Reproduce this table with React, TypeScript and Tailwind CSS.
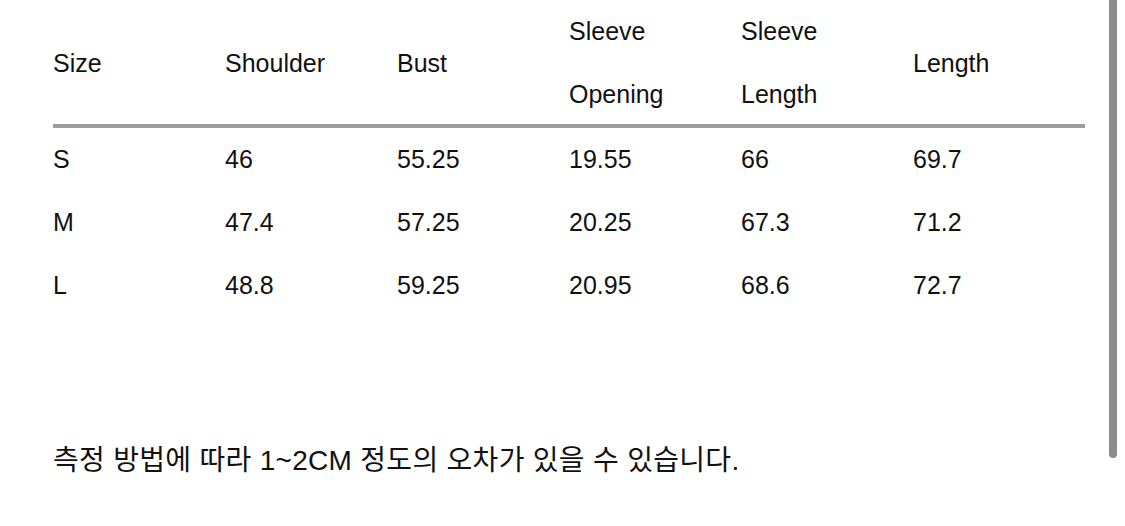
const headers = [
  ["Size"],
  ["Shoulder"],
  ["Bust"],
  ["Sleeve", "Opening"],
  ["Sleeve", "Length"],
  ["Length"],
];

const rows = [
  ["S", "46", "55.25", "19.55", "66", "69.7"],
  ["M", "47.4", "57.25", "20.25", "67.3", "71.2"],
  ["L", "48.8", "59.25", "20.95", "68.6", "72.7"],
];

export default function App() {
  return (
    <div
      className="relative w-[1125px] h-[526px] bg-white text-[#111] overflow-hidden"
      style={{ fontFamily: '"Liberation Sans", "Noto Sans CJK KR", Arial, sans-serif' }}
    >
      <div className="pl-[53px] w-[1085px]">
        <div className="grid grid-cols-6 text-[25px] leading-[63px]">
          {headers.map((h, i) => (
            <div key={i} className="h-[126px] flex flex-col justify-center">
              {h.map((t) => (
                <span key={t}>{t}</span>
              ))}
            </div>
          ))}
        </div>
        <div className="h-[4px] bg-[#9c9c9c] -mt-[2px]" />
        <div className="text-[25px] leading-[63px]">
          {rows.map((r) => (
            <div key={r[0]} className="grid grid-cols-6">
              {r.map((c, i) => (
                <span key={i}>{c}</span>
              ))}
            </div>
          ))}
        </div>
        <p className="mt-[124px] text-[28px] leading-[40px] tracking-[0.3px]">
          측정 방법에 따라 1~2CM 정도의 오차가 있을 수 있습니다.
        </p>
      </div>
      {/* scrollbar */}
      <div className="absolute right-[8px] top-0 w-[8px] h-[458px] bg-[#8c8c8c] rounded-b-full" />
    </div>
  );
}
